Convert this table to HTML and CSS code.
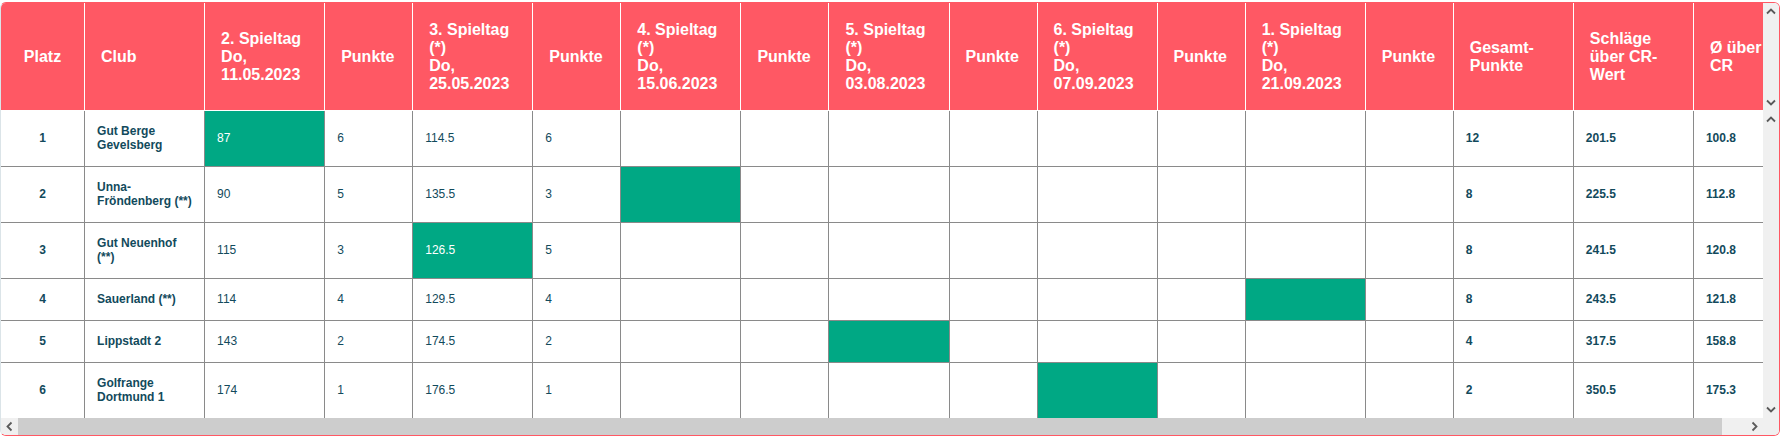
FILE: index.html
```html
<!DOCTYPE html>
<html lang="de">
<head>
<meta charset="utf-8">
<title>Tabelle</title>
<link rel="stylesheet" href="styles.css">
</head>
<body>
<div class="frame">
  <div class="pane pane-head">
    <div class="clip">
      <table class="grid">
        <colgroup>
          <col class="c-platz"><col class="c-club">
          <col class="c-day"><col class="c-pts">
          <col class="c-day"><col class="c-pts">
          <col class="c-day"><col class="c-pts">
          <col class="c-day"><col class="c-pts">
          <col class="c-day"><col class="c-pts">
          <col class="c-day"><col class="c-pts">
          <col class="c-sum"><col class="c-sum"><col class="c-avg">
        </colgroup>
        <thead>
          <tr>
            <th class="center">Platz</th>
            <th>Club</th>
            <th>2. Spieltag<br>Do, 11.05.2023</th>
            <th>Punkte</th>
            <th>3. Spieltag (*)<br>Do, 25.05.2023</th>
            <th>Punkte</th>
            <th>4. Spieltag (*)<br>Do, 15.06.2023</th>
            <th>Punkte</th>
            <th>5. Spieltag (*)<br>Do, 03.08.2023</th>
            <th>Punkte</th>
            <th>6. Spieltag (*)<br>Do, 07.09.2023</th>
            <th>Punkte</th>
            <th>1. Spieltag (*)<br>Do, 21.09.2023</th>
            <th>Punkte</th>
            <th>Gesamt-Punkte</th>
            <th>Schläge über CR-Wert</th>
            <th>Ø über CR</th>
          </tr>
        </thead>
      </table>
    </div>
    <div class="vbar">
      <span class="sb-btn"><svg width="16" height="17" viewBox="0 0 16 17"><path d="M4 10.5L8 6.5l4 4" fill="none" stroke="#5a5a5a" stroke-width="1.8"/></svg></span>
      <span class="sb-track"></span>
      <span class="sb-btn"><svg width="16" height="17" viewBox="0 0 16 17"><path d="M4 6.5L8 10.5l4-4" fill="none" stroke="#5a5a5a" stroke-width="1.8"/></svg></span>
    </div>
  </div>
  <div class="pane pane-body">
    <div class="clip">
      <table class="grid">
        <colgroup>
          <col class="c-platz"><col class="c-club">
          <col class="c-day"><col class="c-pts">
          <col class="c-day"><col class="c-pts">
          <col class="c-day"><col class="c-pts">
          <col class="c-day"><col class="c-pts">
          <col class="c-day"><col class="c-pts">
          <col class="c-day"><col class="c-pts">
          <col class="c-sum"><col class="c-sum"><col class="c-avg">
        </colgroup>
        <tbody>
          <tr>
            <td class="center b">1</td><td class="b">Gut Berge Gevelsberg</td>
            <td class="hit">87</td><td>6</td>
            <td>114.5</td><td>6</td>
            <td></td><td></td><td></td><td></td><td></td><td></td><td></td><td></td>
            <td class="b">12</td><td class="b">201.5</td><td class="b">100.8</td>
          </tr>
          <tr>
            <td class="center b">2</td><td class="b">Unna-Fröndenberg (**)</td>
            <td>90</td><td>5</td>
            <td>135.5</td><td>3</td>
            <td class="hit"></td><td></td><td></td><td></td><td></td><td></td><td></td><td></td>
            <td class="b">8</td><td class="b">225.5</td><td class="b">112.8</td>
          </tr>
          <tr>
            <td class="center b">3</td><td class="b">Gut Neuenhof (**)</td>
            <td>115</td><td>3</td>
            <td class="hit">126.5</td><td>5</td>
            <td></td><td></td><td></td><td></td><td></td><td></td><td></td><td></td>
            <td class="b">8</td><td class="b">241.5</td><td class="b">120.8</td>
          </tr>
          <tr>
            <td class="center b">4</td><td class="b">Sauerland (**)</td>
            <td>114</td><td>4</td>
            <td>129.5</td><td>4</td>
            <td></td><td></td><td></td><td></td><td></td><td></td><td class="hit"></td><td></td>
            <td class="b">8</td><td class="b">243.5</td><td class="b">121.8</td>
          </tr>
          <tr>
            <td class="center b">5</td><td class="b">Lippstadt 2</td>
            <td>143</td><td>2</td>
            <td>174.5</td><td>2</td>
            <td></td><td></td><td class="hit"></td><td></td><td></td><td></td><td></td><td></td>
            <td class="b">4</td><td class="b">317.5</td><td class="b">158.8</td>
          </tr>
          <tr>
            <td class="center b">6</td><td class="b">Golfrange Dortmund 1</td>
            <td>174</td><td>1</td>
            <td>176.5</td><td>1</td>
            <td></td><td></td><td></td><td></td><td class="hit"></td><td></td><td></td><td></td>
            <td class="b">2</td><td class="b">350.5</td><td class="b">175.3</td>
          </tr>
        </tbody>
      </table>
    </div>
    <div class="vbar">
      <span class="sb-btn"><svg width="16" height="17" viewBox="0 0 16 17"><path d="M4 10.5L8 6.5l4 4" fill="none" stroke="#5a5a5a" stroke-width="1.8"/></svg></span>
      <span class="sb-track"></span>
      <span class="sb-btn"><svg width="16" height="17" viewBox="0 0 16 17"><path d="M4 6.5L8 10.5l4-4" fill="none" stroke="#5a5a5a" stroke-width="1.8"/></svg></span>
    </div>
  </div>
  <div class="hbar">
    <span class="sb-btn sb-hbtn"><svg width="17" height="17" viewBox="0 0 17 17"><path d="M10.5 4.5L6.5 8.5l4 4" fill="none" stroke="#5a5a5a" stroke-width="1.8"/></svg></span>
    <span class="sb-track hbar-track"><span class="hbar-thumb"></span></span>
    <span class="sb-btn sb-hbtn"><svg width="17" height="17" viewBox="0 0 17 17"><path d="M6.5 4.5L10.5 8.5l-4 4" fill="none" stroke="#5a5a5a" stroke-width="1.8"/></svg></span>
    <span class="sb-corner"></span>
  </div>
</div>
</body>
</html>
```
FILE: styles.css
```css
html, body {
  margin: 0;
  padding: 0;
  background: #ffffff;
}

body {
  padding-top: 2px;
  font-family: "Liberation Sans", Arial, sans-serif;
}

.frame {
  box-sizing: border-box;
  width: 1780px;
  height: 434px;
  border: 1px solid #ff5864;
  border-left-color: #dbe4e8;
  border-radius: 6px;
  overflow: hidden;
  display: flex;
  flex-direction: column;
  background: #ffffff;
}

.pane {
  flex: none;
  display: flex;
}

.pane-head {
  height: 108px;
}

.pane-body {
  height: 307px;
}

.clip {
  flex: 1;
  min-width: 0;
  overflow: hidden;
}

.grid {
  border-collapse: separate;
  border-spacing: 0;
  table-layout: fixed;
  width: 1789px;
}

.c-platz { width: 84px; }
.c-club { width: 120px; }
.c-day { width: 120px; }
.c-pts { width: 88px; }
.c-sum { width: 120px; }
.c-avg { width: 96px; }

.grid th {
  box-sizing: border-box;
  height: 108px;
  padding: 0 16px;
  background: #ff5864;
  color: #ffffff;
  font-size: 16px;
  font-weight: bold;
  line-height: 18px;
  text-align: left;
  vertical-align: middle;
  border-right: 1px solid #ffffff;
  border-bottom: 1px solid #ffffff;
}

.grid td {
  padding: 13px 10px 14px 12px;
  font-size: 12px;
  line-height: 14px;
  color: #124a5c;
  text-align: left;
  vertical-align: middle;
  border-right: 1px solid #8a8a8a;
  border-bottom: 1px solid #8a8a8a;
  background: #ffffff;
}

.grid .center {
  text-align: center;
  padding-left: 0;
  padding-right: 0;
}

.grid td.b {
  font-weight: bold;
}

.grid td.hit {
  background: #00a884;
  color: #ffffff;
}

/* scrollbars */
.vbar {
  flex: none;
  width: 16px;
  display: flex;
  flex-direction: column;
  background: #f0f0f0;
}

.sb-btn {
  flex: none;
  width: 16px;
  height: 17px;
  display: block;
  background: #f0f0f0;
}

.sb-hbtn {
  width: 17px;
}

.sb-btn svg {
  display: block;
}

.sb-track {
  flex: 1;
  display: block;
  background: #f0f0f0;
}

.hbar {
  flex: none;
  height: 17px;
  display: flex;
  background: #f0f0f0;
}

.hbar-track {
  display: flex;
}

.hbar-thumb {
  display: block;
  width: 98.6%;
  height: 100%;
  background: #cdcdcd;
}

.sb-corner {
  flex: none;
  width: 16px;
  background: #f0f0f0;
}
```
